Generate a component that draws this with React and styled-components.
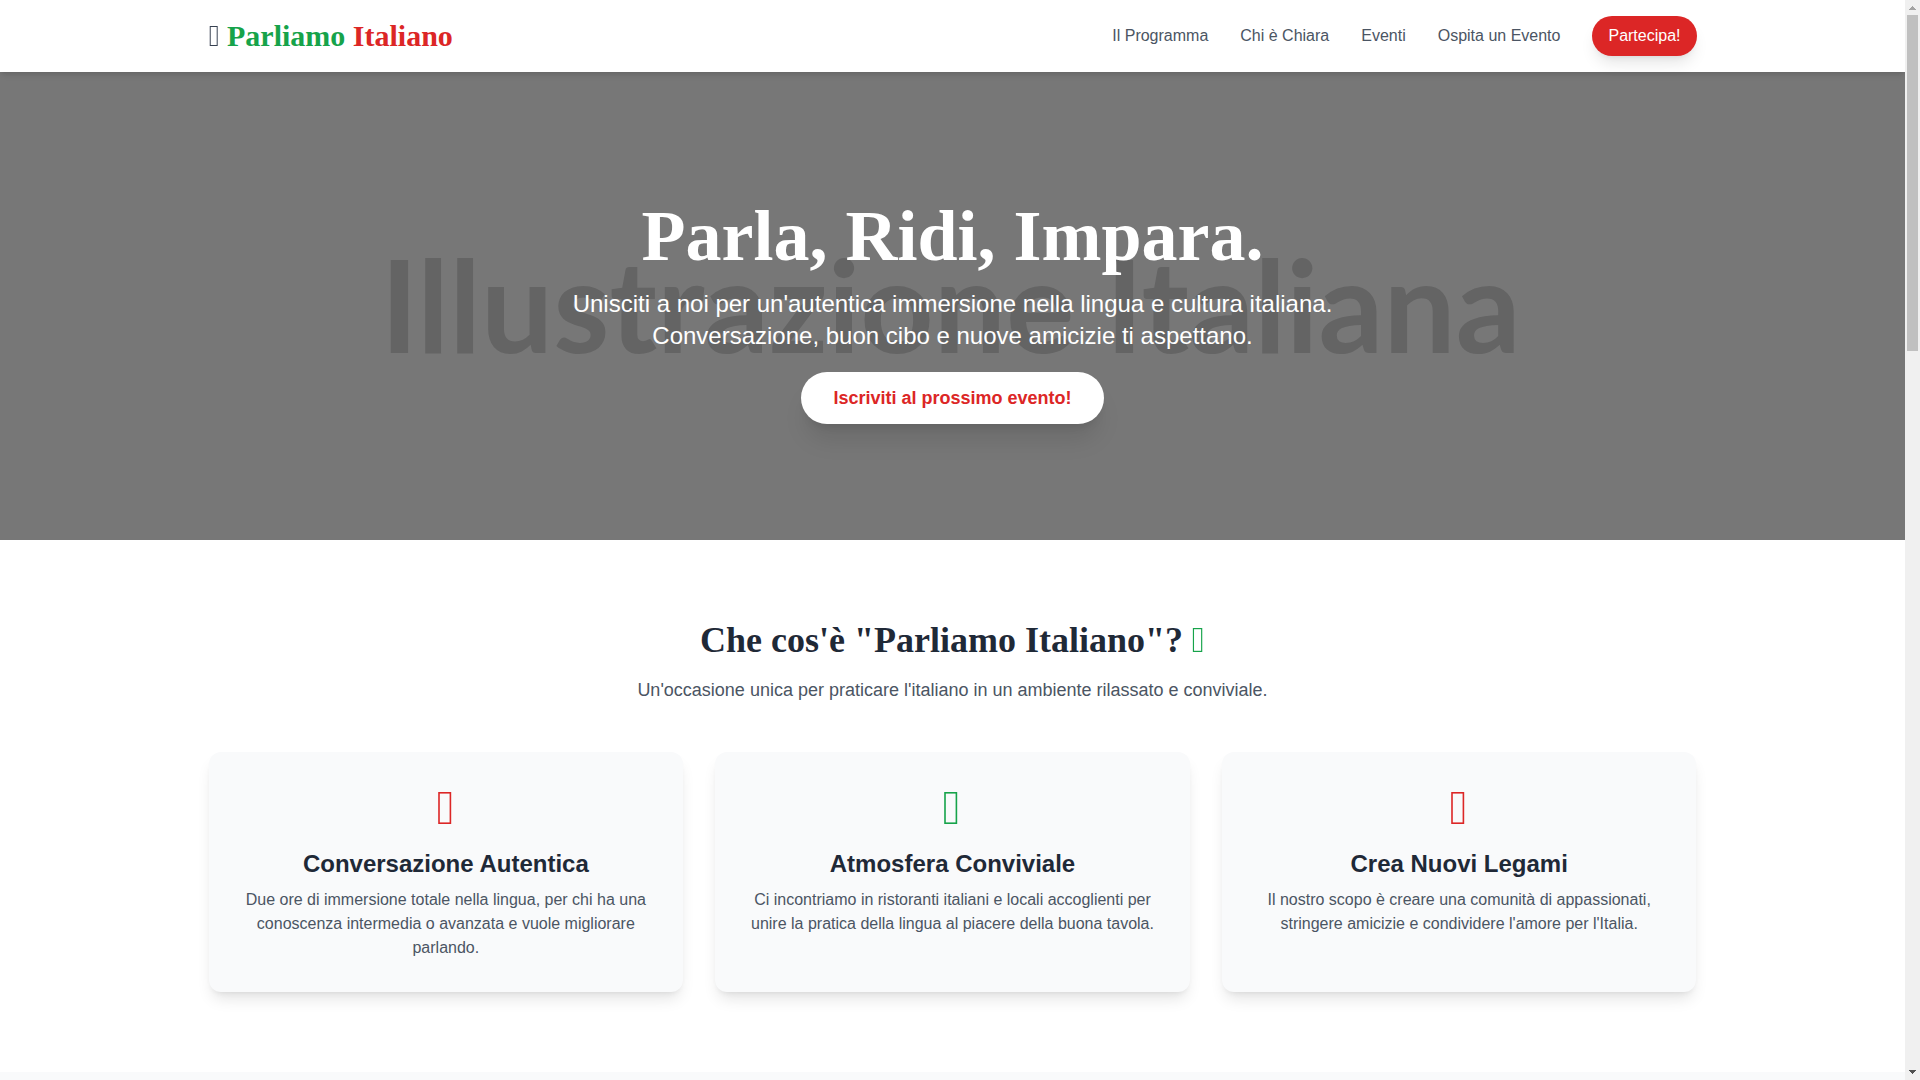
import React from 'react';
import styled, { createGlobalStyle } from 'styled-components';

const green = '#16a34a';
const red = '#dc2626';

const GlobalStyle = createGlobalStyle`
  * {
    box-sizing: border-box;
  }

  body {
    margin: 0;
    background-color: white;
    color: #374151;
    font-family: "Liberation Sans", Arial, sans-serif;
    font-size: 16px;
    line-height: 24px;
  }

  h1, h2, h3, p {
    margin: 0;
  }

  a {
    text-decoration: none;
  }
`;

const Window = styled.div`
  display: flex;
  height: 100vh;
`;

const Page = styled.div`
  flex: 1;
  min-width: 0;
  overflow: hidden;
`;

const Container = styled.div`
  max-width: 1536px;
  margin: 0 auto;
  padding: 0 24px;
`;

const Header = styled.header`
  position: relative;
  z-index: 1;
  padding: 16px 0;
  background-color: white;
  box-shadow: 0 4px 6px -1px rgba(0, 0, 0, 0.1), 0 2px 4px -2px rgba(0, 0, 0, 0.1);
`;

const HeaderRow = styled(Container)`
  display: flex;
  justify-content: space-between;
  align-items: center;
`;

const iconSizes = {
  small: { width: 11, height: 20 },
  medium: { width: 13, height: 24 },
  large: { width: 18, height: 32 },
};

const IconBox = styled.svg`
  display: inline-block;
  vertical-align: baseline;
  fill: none;
  stroke: ${(props) => props.$color};
`;

const Logo = styled.a`
  color: #374151;
  font-family: "Liberation Serif", serif;
  font-size: 30px;
  font-weight: 700;
  line-height: 36px;
`;

const LogoWord = styled.span`
  color: ${(props) => props.$color};
`;

const Nav = styled.nav`
  display: flex;
  align-items: center;
  gap: 32px;
`;

const NavLink = styled.a`
  color: #4b5563;
`;

const JoinLink = styled.a`
  padding: 8px 16px;
  border-radius: 9999px;
  background-color: ${red};
  color: white;
  box-shadow: 0 10px 15px -3px rgba(0, 0, 0, 0.1), 0 4px 6px -4px rgba(0, 0, 0, 0.1);
`;

const Hero = styled.section`
  position: relative;
  display: flex;
  align-items: center;
  justify-content: center;
  min-height: 468px;
  background-color: #777777;
  color: white;
  text-align: center;
`;

const HeroBackdrop = styled.div`
  position: absolute;
  inset: 0;
  display: flex;
  align-items: center;
  justify-content: center;
  padding: 0 4px 4px 0;
  overflow: hidden;
  color: #646464;
  font-family: Lato, sans-serif;
  font-size: 128px;
  font-weight: 700;
  line-height: 1;
  white-space: nowrap;
`;

const HeroContent = styled.div`
  position: relative;
  padding: 0 24px;
`;

const HeroTitle = styled.h1`
  margin-bottom: 16px;
  font-family: "Liberation Serif", serif;
  font-size: 72px;
  line-height: 72px;
`;

const HeroText = styled.p`
  max-width: 768px;
  margin: 0 auto 32px;
  font-size: 24px;
  line-height: 32px;
`;

const HeroLink = styled.a`
  padding: 16px 32px;
  border-radius: 9999px;
  background-color: white;
  color: ${red};
  font-size: 18px;
  font-weight: 700;
  line-height: 28px;
  box-shadow: 0 20px 25px -5px rgba(0, 0, 0, 0.1), 0 8px 10px -6px rgba(0, 0, 0, 0.1);
`;

const Section = styled.section`
  padding: 80px 0;
  background-color: ${(props) => (props.$muted ? '#f9fafb' : 'white')};
  text-align: center;
`;

const SectionTitle = styled.h2`
  margin-bottom: 16px;
  color: #1f2937;
  font-family: "Liberation Serif", serif;
  font-size: 36px;
  line-height: 40px;
`;

const SectionText = styled.p`
  margin-bottom: 48px;
  color: #4b5563;
  font-size: 18px;
  line-height: 28px;
`;

const Cards = styled.div`
  display: grid;
  grid-template-columns: repeat(3, 1fr);
  gap: 32px;
`;

const Card = styled.article`
  padding: 32px;
  border-radius: 12px;
  background-color: #f9fafb;
  box-shadow: 0 10px 15px -3px rgba(0, 0, 0, 0.1), 0 4px 6px -4px rgba(0, 0, 0, 0.1);
`;

const CardIcon = styled.div`
  display: flex;
  align-items: center;
  justify-content: center;
  height: 48px;
  margin-bottom: 16px;
`;

const CardTitle = styled.h3`
  margin-bottom: 8px;
  color: #1f2937;
  font-size: 24px;
  line-height: 32px;
`;

const CardText = styled.p`
  color: #4b5563;
`;

const Scrollbar = styled.div`
  display: flex;
  flex-direction: column;
  align-items: center;
  justify-content: space-between;
  width: 15px;
  background-color: #f0f0f0;
`;

const ScrollTrack = styled.div`
  flex: 1;
  width: 11px;
`;

const ScrollThumb = styled.div`
  height: 32%;
  background-color: #c0c0c0;
`;

const Arrow = styled.svg`
  display: block;
  width: 15px;
  height: 15px;
  fill: ${(props) => props.$color};
`;

const links = ['Il Programma', 'Chi è Chiara', 'Eventi', 'Ospita un Evento'];

const features = [
  {
    color: red,
    title: 'Conversazione Autentica',
    text: 'Due ore di immersione totale nella lingua, per chi ha una conoscenza intermedia o avanzata e vuole migliorare parlando.',
  },
  {
    color: green,
    title: 'Atmosfera Conviviale',
    text: 'Ci incontriamo in ristoranti italiani e locali accoglienti per unire la pratica della lingua al piacere della buona tavola.',
  },
  {
    color: red,
    title: 'Crea Nuovi Legami',
    text: "Il nostro scopo è creare una comunità di appassionati, stringere amicizie e condividere l'amore per l'Italia.",
  },
];

function Icon({ size, color }) {
  const { width, height } = iconSizes[size];
  return (
    <IconBox
      $color={color}
      width={width}
      height={height}
      viewBox="0 0 18 32"
      preserveAspectRatio="none"
      aria-hidden="true"
    >
      <rect x="2" y="0.8" width="11.4" height="30.4" strokeWidth="1.6" />
    </IconBox>
  );
}

function App() {
  return (
    <Window>
      <GlobalStyle />
      <Page>
        <Header>
          <HeaderRow>
            <Logo href="#">
              <Icon size="small" color="#374151" />{' '}
              <LogoWord $color={green}>Parliamo</LogoWord>{' '}
              <LogoWord $color={red}>Italiano</LogoWord>
            </Logo>
            <Nav>
              {links.map((link) => (
                <NavLink key={link} href="#">{link}</NavLink>
              ))}
              <JoinLink href="#">Partecipa!</JoinLink>
            </Nav>
          </HeaderRow>
        </Header>

        <Hero>
          <HeroBackdrop aria-hidden="true">Illustrazione Italiana</HeroBackdrop>
          <HeroContent>
            <HeroTitle>Parla, Ridi, Impara.</HeroTitle>
            <HeroText>
              Unisciti a noi per un'autentica immersione nella lingua e cultura italiana.
              Conversazione, buon cibo e nuove amicizie ti aspettano.
            </HeroText>
            <HeroLink href="#">Iscriviti al prossimo evento!</HeroLink>
          </HeroContent>
        </Hero>

        <Section>
          <Container>
            <SectionTitle>
              Che cos'è "Parliamo Italiano"? <Icon size="medium" color={green} />
            </SectionTitle>
            <SectionText>
              Un'occasione unica per praticare l'italiano in un ambiente rilassato e conviviale.
            </SectionText>
            <Cards>
              {features.map((feature) => (
                <Card key={feature.title}>
                  <CardIcon>
                    <Icon size="large" color={feature.color} />
                  </CardIcon>
                  <CardTitle>{feature.title}</CardTitle>
                  <CardText>{feature.text}</CardText>
                </Card>
              ))}
            </Cards>
          </Container>
        </Section>

        <Section $muted />
      </Page>

      <Scrollbar aria-hidden="true">
        <Arrow $color="#a3a3a3" viewBox="0 0 15 15">
          <path d="M4 10V9h1V8h1V7h1V6h1v1h1v1h1v1h1v1z" />
        </Arrow>
        <ScrollTrack>
          <ScrollThumb />
        </ScrollTrack>
        <Arrow $color="#505050" viewBox="0 0 15 15">
          <path d="M4 5v1h1v1h1v1h1v1h1V8h1V7h1V6h1V5z" />
        </Arrow>
      </Scrollbar>
    </Window>
  );
}

export default App;
